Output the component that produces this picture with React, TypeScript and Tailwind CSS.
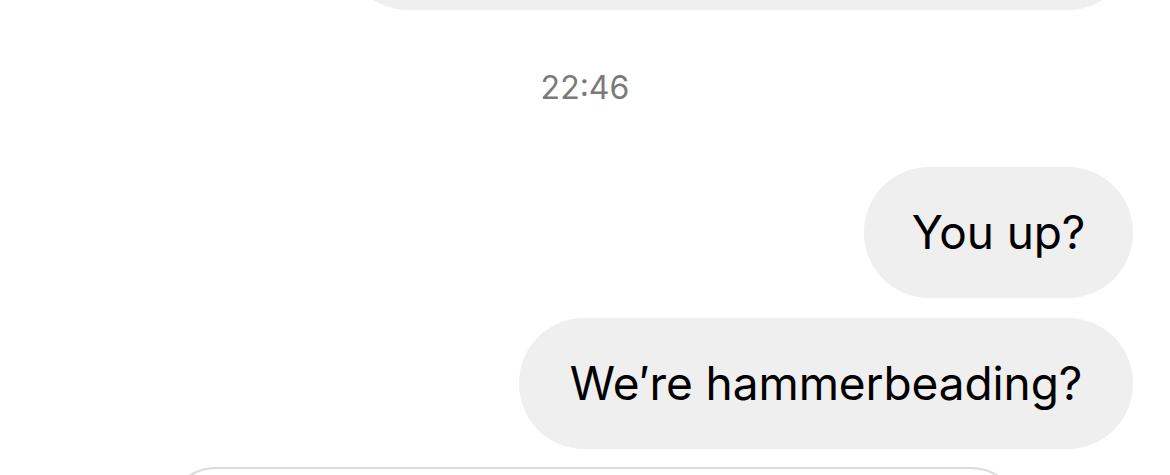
import * as React from 'react'

const font = { fontFamily: 'Inter, "Noto Sans", sans-serif' }

const Bubble = ({ text, width }: { text: string; width: string }) => {
    return (
        <div className="flex justify-end pr-[37px]">
            <div className={`${width} h-[131px] rounded-[65px] bg-[#efefef] flex items-center justify-center text-[46px] tracking-[-0.1px] text-black`}>
                {text}
            </div>
        </div>
    )
}

const App = () => {
    return (
        <div className="w-[1170px] h-[475px] overflow-hidden bg-white flex flex-col" style={font}>
            {/* bottom of the previous message */}
            <div className="flex justify-end pr-[37px] -mt-[121px]">
                <div className="w-[790px] h-[131px] rounded-[65px] bg-[#efefef]" />
            </div>

            <div className="mt-[58px] h-[40px] flex items-center justify-center text-[32px] leading-[40px] text-[#7a7a7a]">
                22:46
            </div>

            <div className="mt-[59px] flex flex-col gap-[20px]">
                <Bubble text="You up?" width="w-[269px]" />
                <Bubble text="We′re hammerbeading?" width="w-[614px]" />
            </div>

            <div className="mt-[18px] pl-[166px]">
                <div className="w-[855px] h-[100px] rounded-[65px] border-2 border-[#dbdbdb]" />
            </div>
        </div>
    )
}

export default App
